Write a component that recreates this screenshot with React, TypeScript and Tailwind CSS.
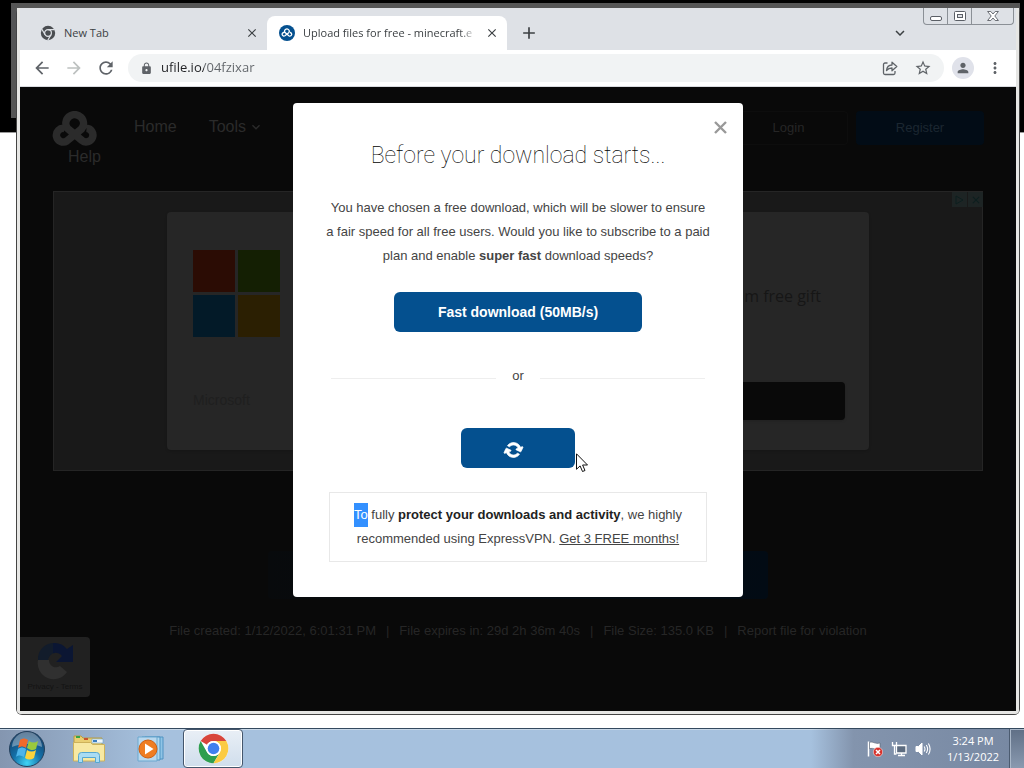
import { useState } from 'react'
import {
  MdAdd,
  MdArrowBack,
  MdArrowForward,
  MdClose,
  MdKeyboardArrowDown,
  MdLock,
  MdMoreVert,
  MdPerson,
  MdRefresh,
  MdStarBorder,
} from 'react-icons/md'

function CloudKnot({ className, weight = 7.5 }: { className?: string; weight?: number }) {
  return (
    <svg viewBox="0 0 46 35" className={className} fill="none" stroke="currentColor" strokeWidth={weight}>
      <path d="M12.500 17.500a6.800 6.800 0 1 0 2.500 12.300L29.500 18a8.800 8.800 0 1 0-14-.5L30 29.500a6.800 6.800 0 1 0 4.500-12.200" />
    </svg>
  )
}

function ChromeMono() {
  return (
    <svg viewBox="0 0 16 16" className="h-4 w-4 shrink-0">
      <circle cx="8" cy="8" r="7.200" fill="#4a4d51" />
      <circle cx="8" cy="8" r="3.400" fill="#4a4d51" stroke="#dee1e6" strokeWidth="1.200" />
      <path d="M8 4.600h6.600M5.100 9.700 1.900 4.200M10.900 9.700 7.800 15.200" stroke="#dee1e6" strokeWidth="1.200" />
    </svg>
  )
}

function ShareIcon() {
  return (
    <svg viewBox="0 0 16 16" className="h-4 w-4" fill="none" stroke="#5f6368" strokeWidth="1.300" strokeLinejoin="round">
      <path d="M5.500 3H3a1.500 1.500 0 0 0-1.500 1.500V13A1.500 1.500 0 0 0 3 14.500h8.500A1.500 1.500 0 0 0 13 13v-2" />
      <path d="M4.500 10.500c.4-3.700 2.400-5.400 5.500-5.500V2.200L14.800 6.600 10 10.800V8C7.800 8 6 8.700 4.500 10.500Z" />
    </svg>
  )
}

function WindowControls() {
  const button = 'flex items-center justify-center hover:bg-white/60'
  return (
    <div className="flex h-[17px] divide-x divide-[#8b9096] rounded-b border border-t-0 border-[#8b9096]">
      <button aria-label="Minimize" className={`${button} w-6`}>
        <svg viewBox="0 0 12 12" className="h-3 w-3">
          <rect x=".5" y="6.500" width="11" height="4" rx="1.500" fill="#fff" stroke="#5b5f66" />
        </svg>
      </button>
      <button aria-label="Restore" className={`${button} w-6`}>
        <svg viewBox="0 0 12 12" className="h-3 w-3">
          <rect x=".5" y="1.500" width="11" height="9" rx="1" fill="#fff" stroke="#5b5f66" />
          <rect x="3.500" y="4.500" width="5" height="3" fill="#dee1e6" stroke="#5b5f66" />
        </svg>
      </button>
      <button aria-label="Close" className={`${button} w-[41px]`}>
        <svg viewBox="0 0 12 12" className="h-3 w-3">
          <path d="M.6 1.500h3.200L6 4l2.200-2.500h3.200L7.800 6l3.600 4.500H8.200L6 8l-2.200 2.500H.6L4.200 6Z" fill="#fff" stroke="#5b5f66" strokeWidth=".9" />
        </svg>
      </button>
    </div>
  )
}

function TabStrip() {
  return (
    <div className="flex h-[42px] bg-[#dee1e6]">
      <div className="flex w-[247px] shrink-0 items-center pt-2 pr-2 pl-5 text-[11px] text-[#3c4043]">
        <ChromeMono />
        <span className="ml-2 flex-1">New Tab</span>
        <button aria-label="Close New Tab">
          <MdClose size={14} className="text-[#3c4043]" />
        </button>
      </div>
      <div className="mt-2 flex w-[240px] shrink-0 items-center rounded-t-lg bg-white pr-2 pl-3 text-[11px] text-[#3c4043]">
        <span className="flex h-4 w-4 shrink-0 items-center justify-center rounded-full bg-[#04508f] text-white">
          <CloudKnot className="w-3" weight={5} />
        </span>
        <span className="ml-2 flex-1 whitespace-nowrap mask-r-from-90%">Upload files for free - minecraft.e</span>
        <button aria-label="Close tab" className="ml-2">
          <MdClose size={14} className="text-[#3c4043]" />
        </button>
      </div>
      <button aria-label="New tab" className="ml-3 mt-2 text-[#3c4043]">
        <MdAdd size={20} />
      </button>
      <button aria-label="Search tabs" className="mr-3.5 ml-auto mt-2 text-[#3c4043]">
        <MdKeyboardArrowDown size={18} />
      </button>
      <div className="mr-0.5">
        <WindowControls />
      </div>
    </div>
  )
}

function Toolbar() {
  return (
    <div className="flex h-[37px] items-center border-b border-[#dadce0] bg-white px-3 text-[#5f6368]">
      <button aria-label="Back">
        <MdArrowBack size={20} />
      </button>
      <button aria-label="Forward" disabled className="ml-3 text-[#bdc1c0]">
        <MdArrowForward size={20} />
      </button>
      <button aria-label="Reload" className="ml-3">
        <MdRefresh size={20} />
      </button>
      <div className="ml-3 flex h-7 flex-1 items-center rounded-full bg-[#f1f3f4] px-3">
        <MdLock size={13} />
        {/* host part of the address is darker than the path */}
        <input
          aria-label="Address"
          defaultValue="ufile.io/04fzixar"
          className="ml-2 min-w-0 flex-1 bg-[linear-gradient(90deg,#202124_43px,#5f6368_43px)] bg-clip-text text-[13px] text-transparent outline-none"
        />
        <button aria-label="Share">
          <ShareIcon />
        </button>
        <button aria-label="Bookmark" className="ml-4">
          <MdStarBorder size={18} />
        </button>
      </div>
      <button aria-label="Profile" className="ml-2 flex h-[22px] w-[22px] items-center justify-center rounded-full bg-[#e0e2ea]">
        <MdPerson size={16} />
      </button>
      <button aria-label="Menu" className="ml-3">
        <MdMoreVert size={18} />
      </button>
    </div>
  )
}

function SiteHeader() {
  return (
    <header className="flex items-start justify-between px-8 pt-6">
      <nav className="flex flex-col text-base text-[#2b2b2b]">
        <div className="flex items-start">
          <a href="#home" aria-label="ufile" className="h-9">
            <CloudKnot className="w-[46px]" />
          </a>
          <a href="#home" className="ml-9 pt-1">
            Home
          </a>
          <a href="#tools" className="ml-8 flex items-center pt-1">
            Tools <MdKeyboardArrowDown size={16} className="ml-0.5" />
          </a>
        </div>
        <a href="#help" className="-mt-0.5 ml-4">
          Help
        </a>
      </nav>
      <div className="flex gap-2 text-[13px]">
        <button className="h-[34px] w-[119px] rounded border border-[#0d0d0d] text-[#262626]">Login</button>
        <button className="h-[34px] w-32 rounded bg-[#020c16] text-[#1c2731]">Register</button>
      </div>
    </header>
  )
}

function Advert() {
  return (
    <section aria-label="Advertisement" className="mx-[33px] mt-[22px] flex h-[280px] items-center justify-center border border-[#252525] bg-[#191919]">
      <div className="flex h-[238px] w-[702px] justify-between rounded bg-[#262626] p-6 shadow">
        <div className="flex flex-col justify-between px-0.5 pt-3.5 pb-4">
          <div className="grid grid-cols-2 gap-[3px]">
            <span className="h-[42px] w-[42px] bg-[#2b0c04]" />
            <span className="h-[42px] w-[42px] bg-[#141f03]" />
            <span className="h-[42px] w-[42px] bg-[#031a28]" />
            <span className="h-[42px] w-[42px] bg-[#2b1f02]" />
          </div>
          <span className="text-sm text-[#1f1f1f]">Microsoft</span>
        </div>
        <div className="flex w-64 flex-col items-end justify-between pt-12 pb-1.5">
          <span className="pr-6 font-['Open_Sans',sans-serif] text-base text-[#161616]">premium free gift</span>
          <span className="h-[38px] w-full rounded bg-[#090909] shadow" />
        </div>
      </div>
      <div className="absolute top-[105px] right-[33px] flex gap-px">
        <span className="flex h-[15px] w-[15px] items-center justify-center bg-[#1d2424]">
          <svg viewBox="0 0 10 10" className="w-2.5" fill="none" stroke="#0c1f1f">
            <path d="M1 1v8l7-4Z" />
          </svg>
        </span>
        <span className="flex h-[15px] w-[15px] items-center justify-center bg-[#1d2424] text-[#0c1f1f]">
          <MdClose size={12} />
        </span>
      </div>
    </section>
  )
}

function FileDetails() {
  return (
    <footer className="mt-[22px] flex justify-center text-[13px] whitespace-pre text-[#262626]">
      <span>File created: 1/12/2022, 6:01:31 PM</span>
      <span className="mx-2.5">|</span>
      <span>File expires in: 29d 2h 36m 40s</span>
      <span className="mx-2.5">|</span>
      <span>File Size: 135.0 KB</span>
      <span className="mx-2.5">|</span>
      <a href="#report">Report file for violation</a>
    </footer>
  )
}

function RecaptchaBadge() {
  return (
    <div className="absolute bottom-[14px] left-0 flex h-[60px] w-[70px] flex-col items-center rounded-r-sm bg-[#212121] pt-1">
      <svg viewBox="0 0 40 40" className="h-10 w-10">
        <path d="M3 20A16 16 0 0 1 20 2v10a8 8 0 0 0-7 8Z" fill="#121c2b" />
        <path d="M18 2a16 16 0 0 1 14 6l6-4v17H21l6-6a9 9 0 0 0-9-3Z" fill="#0b1633" />
        <path d="M3 19h11a7 7 0 0 0 11 6l7 6A16 16 0 0 1 3 19Z" fill="#303030" />
      </svg>
      <span className="text-[8px] leading-3 text-[#131313]">Privacy - Terms</span>
    </div>
  )
}

function SpinnerIcon() {
  return (
    <svg viewBox="0 0 1536 1792" className="mt-1 h-[18px] w-[15px] rotate-[25deg] overflow-visible" fill="currentColor" stroke="currentColor" strokeWidth="60">
      <path d="M1511 1056q0 5-1 7-64 268-268 434.500t-478 166.500q-146 0-282.500-55t-243.500-157l-129 129q-19 19-45 19t-45-19-19-45v-448q0-26 19-45t45-19h448q26 0 45 19t19 45-19 45l-137 137q71 66 161 102t187 36q134 0 250-65t186-179q11-17 53-117 8-23 30-23h192q13 0 22.500 9.500t9.500 22.500zm25-800v448q0 26-19 45t-45 19h-448q-26 0-45-19t-19-45 19-45l138-138q-148-137-349-137-134 0-250 65t-186 179q-11 17-53 117-8 23-30 23h-199q-13 0-22.500-9.500t-9.500-22.500v-7q65-268 270-434.500t480-166.500q146 0 284 55.500t245 156.500l130-129q19-19 45-19t45 19 19 45z" />
    </svg>
  )
}

function Cursor() {
  return (
    <svg viewBox="0 0 12 20" className="pointer-events-none absolute top-[25px] left-[115px] h-5 w-3">
      <path d="M.5.8v15.500l3.600-3.400 2.400 5.600 2.500-1-2.400-5.500h4.900Z" fill="#fff" stroke="#111" strokeWidth="1" />
    </svg>
  )
}

function DownloadModal({ onClose }: { onClose: () => void }) {
  return (
    <div className="absolute inset-0 flex items-start justify-center pt-4">
      <div role="dialog" aria-labelledby="modal-title" className="relative w-[450px] rounded bg-white px-9 pt-[37px] pb-[35px] text-center text-[13px] leading-6 text-[#444]">
        <button aria-label="Close" onClick={onClose} className="absolute top-4 right-3.5 p-0.5 text-[#999]">
          <svg viewBox="0 0 13 13" className="h-[13px] w-[13px]" stroke="currentColor" strokeWidth="2.400">
            <path d="m1 1 11 11M12 1 1 12" />
          </svg>
        </button>
        <h2 id="modal-title" className="font-['Roboto',sans-serif] text-[23px] leading-8 font-thin text-black">
          Before your download starts...
        </h2>
        <p className="-mx-2 mt-6">
          You have chosen a free download, which will be slower to ensure
          <br />
          a fair speed for all free users. Would you like to subscribe to a paid
          <br />
          plan and enable <b>super fast</b> download speeds?
        </p>
        <button className="mt-6 h-10 w-[248px] rounded-md bg-[#04508f] text-sm font-bold text-white">Fast download (50MB/s)</button>
        <div className="mt-8 flex items-center px-0.5">
          <hr className="mt-1 flex-1 border-[#eee]" />
          <span className="px-4">or</span>
          <hr className="mt-1 flex-1 border-[#eee]" />
        </div>
        <div className="relative mx-auto mt-10 w-[114px]">
          <button aria-label="Preparing slow download" className="flex h-10 w-full items-center justify-center rounded-md bg-[#04508f] pr-2.5 text-white">
            <SpinnerIcon />
          </button>
          <Cursor />
        </div>
        <div className="mt-6 border border-[#e8e8e8] py-2.5">
          <span className="inline-block bg-[#3390ff] text-white">To</span> fully <b className="text-[#222]">protect your downloads and activity</b>, we highly
          <br />
          recommended using ExpressVPN.{' '}
          <a href="#vpn" className="underline">
            Get 3 FREE months!
          </a>
        </div>
      </div>
    </div>
  )
}

function UfilePage() {
  const [open, setOpen] = useState(true)
  return (
    <main className="relative flex-1 bg-[#090909] font-['Liberation_Sans',Arial,sans-serif]">
      <SiteHeader />
      <Advert />
      <div className="mt-20 flex justify-center">
        <button
          aria-label="Download"
          className="h-12 w-[500px] max-w-full rounded bg-linear-to-r from-[#080a0c] to-[#020b14]"
          onClick={() => setOpen(true)}
        />
      </div>
      <FileDetails />
      <RecaptchaBadge />
      {open && <DownloadModal onClose={() => setOpen(false)} />}
    </main>
  )
}

function BrowserWindow() {
  return (
    <div className="relative mt-2 mr-1 mb-[13px] ml-4 flex flex-1 flex-col rounded-md border border-t-0 border-[#444]">
      <div className="flex flex-1 flex-col rounded-b border-x-3 border-b-3 border-[#e6e6e4]">
        <TabStrip />
        <Toolbar />
        <UfilePage />
      </div>
    </div>
  )
}

function StartOrb() {
  return (
    <svg viewBox="0 0 38 38" className="h-[38px] w-[38px]">
      <defs>
        <radialGradient id="orb" cx="50%" cy="90%" r="90%">
          <stop offset="0" stopColor="#3fd4f5" />
          <stop offset=".45" stopColor="#1470a8" />
          <stop offset="1" stopColor="#143a62" />
        </radialGradient>
      </defs>
      <circle cx="19" cy="19" r="17.500" fill="url(#orb)" stroke="#24405c" />
      <path d="M4 17a15 15 0 0 1 30 0c-9-4-21-4-30 0Z" fill="#fff" opacity=".35" />
      <path d="M12 10c3-2 5-2 8 0l-2 8c-3-2-5-2-8 0Z" fill="#f0692b" />
      <path d="M21 11c3 2 6 2 9 0l-2 8c-3 2-6 1-9-1Z" fill="#9ac93c" />
      <path d="M10 19c3-2 5-2 8 0l-2 8c-3-2-6-2-8 0Z" fill="#4db4ea" />
      <path d="M19 20c3 2 6 2 9 0l-2 8c-3 2-6 2-9 0Z" fill="#fbd33c" />
    </svg>
  )
}

function ExplorerIcon() {
  return (
    <svg viewBox="0 0 34 30" className="h-[30px] w-[34px]">
      <path d="M2 2h7l2 2h19v22H2Z" fill="#e9cf72" stroke="#b99b45" />
      <path d="M4 2h4v2H4Z" fill="#37a546" />
      <path d="M12 4h4v2h-4Z" fill="#c8522e" />
      <path d="M20 5h11v4H20Z" fill="#eef6fb" stroke="#6aa5cc" strokeWidth=".6" />
      <path d="M21 6h4v2h-4Z" fill="#3a7fc2" />
      <path d="M1.500 8.500h17l2 2h12V27h-31Z" fill="#f7e9a3" stroke="#cdb25a" />
      <path d="M6.500 28.500v-7q0-3 3-3h15q3 0 3 3v7h-4v-5h-13v5Z" fill="#a9dcf3" stroke="#57a7cf" />
    </svg>
  )
}

function MediaPlayerIcon() {
  return (
    <svg viewBox="0 0 30 28" className="h-7 w-[30px]">
      <path d="M9 2h18v22H9Z" fill="#8fc4e6" stroke="#4f93c2" />
      <path d="M6 2h18v23H6Z" fill="#b0d8ef" stroke="#4f93c2" />
      <path d="M2 2h19v24H2Z" fill="#b9d8ee" stroke="#6ba8cf" />
      <circle cx="12" cy="14" r="9" fill="#ef7d22" stroke="#cf5f10" />
      <path d="M9 8.500v11l8.500-5.500Z" fill="#fff" />
    </svg>
  )
}

function ChromeIcon() {
  return (
    <svg viewBox="0 0 48 48" className="h-[31px] w-[31px]">
      <circle cx="24" cy="24" r="23" fill="#fff" />
      <path d="M4.100 12.500A23 23 0 0 1 43.900 12.500H24a11.500 11.500 0 0 0-10 5.800Z" fill="#d8453b" />
      <path d="M4.100 12.500A23 23 0 0 0 24 47l10-17.300a11.500 11.500 0 0 1-20 0Z" fill="#2e9e4f" />
      <path d="M43.900 12.500A23 23 0 0 1 24 47l10-17.300a11.500 11.500 0 0 0-10-17.200Z" fill="#fbcb43" />
      <circle cx="24" cy="24" r="11.500" fill="#fff" />
      <circle cx="24" cy="24" r="9" fill="#4080ee" />
    </svg>
  )
}

function TrayIcons() {
  return (
    <div className="mr-1.5 flex items-center gap-2">
      <svg viewBox="0 0 16 16" className="h-4 w-4" aria-label="Action Center">
        <path d="M1.500.5v15" stroke="#fff" strokeWidth="1.500" />
        <path d="M2.500 1.500c4-1.500 5 2 10.500.5v6c-5 1.500-6-1.500-10.500-.5Z" fill="#fff" stroke="#46505e" strokeWidth=".5" />
        <circle cx="11" cy="11" r="4.700" fill="#d8322c" stroke="#fff" strokeWidth=".5" />
        <path d="m9 9 4 4m0-4-4 4" stroke="#fff" strokeWidth="1.500" />
      </svg>
      <svg viewBox="0 0 16 16" className="h-4 w-4" aria-label="Network">
        <path d="M5.500 4.500h9.500v7.500H5.500Z" fill="#5d6c80" stroke="#fff" strokeWidth="1.300" />
        <path d="M7 14.500h7M10.500 12v2" stroke="#fff" strokeWidth="1.300" />
        <path d="M1.500 1v3.500h4V1M3.500 4.500V13h2" stroke="#fff" strokeWidth="1.300" fill="none" />
      </svg>
      <svg viewBox="0 0 16 16" className="h-4 w-4" aria-label="Volume" fill="none" stroke="#fff">
        <path d="M1 5.500h2.500L7 2v12l-3.500-3.500H1Z" fill="#fff" />
        <path d="M9.200 5.500q1.600 2.500 0 5M11.300 4q2.600 4 0 8M13.400 2.500q3.400 5.500 0 11" strokeWidth="1.100" />
      </svg>
    </div>
  )
}

function Taskbar() {
  return (
    <div className="flex h-10 items-center border-t border-[#34495e] bg-linear-to-r from-[#8496b0] via-[#a6c1de] via-15% to-[#a6c1de] font-['Open_Sans','Noto_Sans',sans-serif] shadow-[inset_0_1px_0_#c8d8e8]">
      <button aria-label="Start" className="ml-2">
        <StartOrb />
      </button>
      <button aria-label="Windows Explorer" className="ml-[26px]">
        <ExplorerIcon />
      </button>
      <button aria-label="Windows Media Player" className="ml-[30px]">
        <MediaPlayerIcon />
      </button>
      <button
        aria-label="Google Chrome"
        className="ml-[17px] flex h-full w-[60px] items-center justify-center rounded-sm border border-[#44566c] bg-linear-to-b from-[#e9eff6] to-[#d0deec] shadow-[inset_0_0_0_1px_#fff]"
      >
        <ChromeIcon />
      </button>
      <div className="ml-auto flex h-full items-center bg-linear-to-r from-[#8394ad]/0 via-[#8394ad] via-20% to-[#7788a2] pl-14">
        <TrayIcons />
        <div className="w-[72px] text-center text-[11px] leading-4 text-white">
          <div>3:24 PM</div>
          <div>1/13/2022</div>
        </div>
        <button aria-label="Show desktop" className="h-full w-[15px] border-l border-[#4b5b70] bg-linear-to-b from-[#5f6f86] to-[#8a9ab0] shadow-[inset_1px_1px_0_#a9b7c8]" />
      </div>
    </div>
  )
}

export default function App() {
  return (
    <div className="flex min-h-screen flex-col font-['Open_Sans','Noto_Sans',sans-serif]">
      <div className="relative flex flex-1 flex-col bg-white">
        {/* windows open behind the browser */}
        <div className="absolute inset-x-0 top-0 h-[133px] border-b border-[#999] bg-black" />
        <div className="absolute top-[3px] right-1 left-[11px] h-[115px] bg-[#555]" />
        <BrowserWindow />
      </div>
      <Taskbar />
    </div>
  )
}
